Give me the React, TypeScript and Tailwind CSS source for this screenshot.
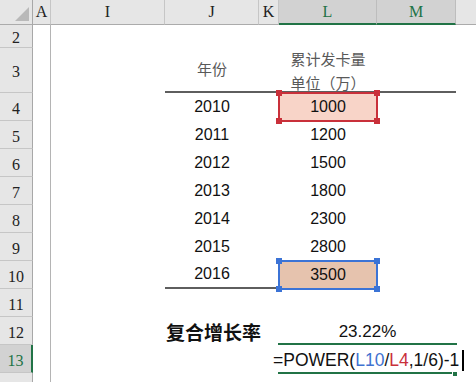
import React from 'react';

const years = [
  { row: 4, year: 2010, value: 1000 },
  { row: 5, year: 2011, value: 1200 },
  { row: 6, year: 2012, value: 1500 },
  { row: 7, year: 2013, value: 1800 },
  { row: 8, year: 2014, value: 2300 },
  { row: 9, year: 2015, value: 2800 },
  { row: 10, year: 2016, value: 3500 },
];

const sans = "font-['Liberation_Sans',Arial,sans-serif]";
const cjk = "font-['Noto_Sans_CJK_SC','Liberation_Sans',sans-serif]";

function ColHead({ label, active }: { label: string; active?: boolean }) {
  if (active)
    return (
      <div className="flex items-center justify-center bg-[#d2d2d2] border-r border-[#bdbdbd] border-b-2 border-b-[#217346] text-[#217346] text-[16px]">
        {label}
      </div>
    );
  return (
    <div className="flex items-center justify-center bg-[#e6e6e6] border-r border-[#c6c6c6] border-b border-b-[#ababab] text-[#222] text-[16px]">
      {label}
    </div>
  );
}

function RowHead({ n, active }: { n?: number; active?: boolean }) {
  if (active)
    return (
      <div className="flex items-center justify-center bg-[#d2d2d2] border-b border-[#c6c6c6] border-r-2 border-r-[#217346] text-[#217346] text-[16px] pt-1">
        {n}
      </div>
    );
  return (
    <div className="flex items-center justify-center bg-[#e6e6e6] border-b border-[#c6c6c6] border-r border-r-[#a8a8a8] text-[#222] text-[16px] pt-1">
      {n}
    </div>
  );
}

// Rahmen mit Eckgriffen (Formel-Referenz)
function RefBox({ tone }: { tone: 'red' | 'blue' }) {
  const red = tone === 'red';
  const border = red ? 'border-[#c9303a]' : 'border-[#3b73d6]';
  const handle = red ? 'bg-[#c9303a]' : 'bg-[#3b73d6]';
  return (
    <div className={`absolute -left-px -right-px -top-px -bottom-px border-2 ${border} pointer-events-none`}>
      <span className={`absolute -left-[4px] -top-[4px] w-[6px] h-[6px] ${handle}`} />
      <span className={`absolute -right-[4px] -top-[4px] w-[6px] h-[6px] ${handle}`} />
      <span className={`absolute -left-[4px] -bottom-[4px] w-[6px] h-[6px] ${handle}`} />
      <span className={`absolute -right-[4px] -bottom-[4px] w-[6px] h-[6px] ${handle}`} />
    </div>
  );
}

export default function App() {
  return (
    <div className="w-[476px] h-[382px] overflow-hidden bg-white">
      <div className="grid grid-cols-[33px_18px_114px_94px_20px_98px_79px_1fr] grid-rows-[25px_23px_45px_repeat(10,28px)_1fr] h-full font-['Liberation_Serif','Times_New_Roman',serif]">
        {/* Kopfzeile */}
        <div className="relative bg-[#e6e6e6] border-r border-r-[#a8a8a8] border-b border-b-[#ababab]">
          <svg className="absolute right-[3px] bottom-[3px]" width="14" height="14" viewBox="0 0 14 14">
            <polygon points="14,0 14,14 0,14" fill="#b9b9b9" />
          </svg>
        </div>
        <ColHead label="A" />
        <ColHead label="I" />
        <ColHead label="J" />
        <ColHead label="K" />
        <ColHead label="L" active />
        <ColHead label="M" active />
        <div className="bg-[#e6e6e6] border-b border-b-[#ababab]" />

        {/* Zeile 2 */}
        <RowHead n={2} />
        <div className="border-r border-[#b4b4b4]" />
        <div />
        <div />
        <div />
        <div />
        <div />
        <div />

        {/* Zeile 3 */}
        <RowHead n={3} />
        <div className="border-r border-[#b4b4b4]" />
        <div />
        <div className={`flex items-center justify-center border-b-2 border-[#5e5e5e] text-[15px] text-[#595959] ${cjk}`}>
          年份
        </div>
        <div className="border-b-2 border-[#5e5e5e]" />
        <div className={`flex flex-col items-center justify-center border-b-2 border-[#5e5e5e] text-[15px] leading-[24px] text-[#595959] pt-[2px] ${cjk}`}>
          <span>累计发卡量</span>
          <span>单位（万）</span>
        </div>
        <div className="border-b-2 border-[#5e5e5e]" />
        <div />

        {/* Zeilen 4–10 */}
        {years.map((r) => {
          const last = r.row === 10;
          return (
            <React.Fragment key={r.row}>
              <RowHead n={r.row} />
              <div className="border-r border-[#b4b4b4]" />
              <div />
              <div
                className={`flex items-center justify-center text-[16px] text-[#111] ${sans} ${
                  last ? 'border-b-2 border-[#5e5e5e]' : ''
                }`}
              >
                {r.year}
              </div>
              <div className={last ? 'border-b-2 border-[#5e5e5e]' : ''} />
              <div
                className={`relative flex items-center justify-center text-[16px] text-[#111] ${sans} ${
                  r.row === 4 ? 'bg-[#f8d4c8]' : last ? 'bg-[#e6c3ae]' : ''
                }`}
              >
                {r.value}
                {r.row === 4 && <RefBox tone="red" />}
                {last && <RefBox tone="blue" />}
              </div>
              <div />
              <div />
            </React.Fragment>
          );
        })}

        {/* Zeile 11 */}
        <RowHead n={11} />
        <div className="border-r border-[#b4b4b4]" />
        <div />
        <div />
        <div />
        <div />
        <div />
        <div />

        {/* Zeile 12 */}
        <RowHead n={12} />
        <div className="border-r border-[#b4b4b4]" />
        <div />
        <div className={`col-span-2 flex items-center pl-px pt-[3px] text-[19px] font-bold text-[#111] whitespace-nowrap ${cjk}`}>
          复合增长率
        </div>
        <div className={`col-span-2 flex items-center justify-center pt-[2px] text-[17px] text-[#111] ${sans}`}>
          23.22%
        </div>
        <div />

        {/* Zeile 13 – Bearbeitungsmodus */}
        <RowHead n={13} active />
        <div className="border-r border-[#b4b4b4]" />
        <div />
        <div />
        <div />
        <div className="relative col-span-2">
          <div className="absolute -left-px -right-px -top-[2px] h-[2px] bg-[#217346]" />
          <div className="absolute -left-px right-[4px] -bottom-px h-[2px] bg-[#217346]" />
          <div className="absolute -right-[2px] -bottom-[4px] w-[6px] h-[6px] bg-[#217346] border border-white" />
          <div className={`flex items-center h-full -ml-[6px] pt-[2px] text-[17.5px] text-[#111] whitespace-nowrap ${sans}`}>
            <span>=POWER(</span>
            <span className="text-[#3f72d0]">L10</span>
            <span>/</span>
            <span className="text-[#c9303a]">L4</span>
            <span>,1/6)-1</span>
            <span className="ml-[3px] shrink-0 w-[2px] h-[21px] bg-black" />
          </div>
        </div>
        <div />

        {/* Zeile 14 (angeschnitten) */}
        <div className="bg-[#e6e6e6] border-r border-r-[#a8a8a8]" />
        <div className="border-r border-[#b4b4b4]" />
        <div />
        <div />
        <div />
        <div />
        <div />
        <div />
      </div>
    </div>
  );
}
